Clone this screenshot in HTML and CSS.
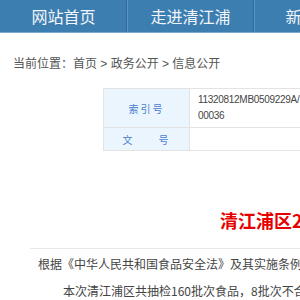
FILE: index.html
```html
<!DOCTYPE html>
<html lang="zh-CN">
<head>
    <meta charset="UTF-8">
    <title>信息公开</title>
    <link rel="stylesheet" href="styles.css">
</head>
<body>
    <div class="nav">
        <a href="#">网站首页</a>
        <a href="#">走进清江浦</a>
        <a href="#">新闻中心</a>
        <a href="#">政务公开</a>
    </div>

    <div class="crumb">当前位置：首页 &gt; 政务公开 &gt; 信息公开</div>

    <table class="info">
        <tr class="row-tall">
            <td class="label">索引号</td>
            <td class="value">11320812MB0509229A/<br>00036</td>
        </tr>
        <tr class="row-short">
            <td class="label">文　　号</td>
            <td class="value"></td>
        </tr>
    </table>

    <h1 class="title">清江浦区2023年食品安全监督抽检信息公告</h1>

    <div class="article">
        <p class="lead">根据《中华人民共和国食品安全法》及其实施条例的有关规定，现将抽检结果公告如下。</p>
        <p class="indent">本次清江浦区共抽检160批次食品，8批次不合格。</p>
    </div>
</body>
</html>
```

FILE: styles.css
```css
html, body {
    overflow: hidden;
}
body {
    margin: 0;
    width: 1000px;
    font-family: "Noto Sans CJK SC", sans-serif;
    background-color: #fff;
}
.nav {
    display: flex;
    height: 32px;
    background-color: #3d7eb1;
    border-bottom: 1px solid #78a9d0;
}
.nav a {
    box-sizing: border-box;
    width: 127px;
    line-height: 32px;
    text-align: center;
    font-size: 16px;
    color: #f2f6fa;
    text-decoration: none;
    border-left: 1px solid #5b95c4;
    border-right: 1px solid #2e6a99;
}
.nav a:first-child {
    border-left-color: #3d7eb1;
}
.crumb {
    margin-top: 21px;
    padding-left: 13px;
    line-height: 20px;
    font-family: "Liberation Sans", "Noto Sans CJK SC", sans-serif;
    font-size: 12px;
    color: #555;
}
.info {
    margin: 14px 0 0 103px;
    width: 500px;
    border-collapse: collapse;
}
.info td {
    border: 1px solid #e3e3e3;
    padding: 0;
}
.row-tall {
    height: 39px;
}
.row-short {
    height: 23px;
}
.label {
    width: 85px;
    background-color: #eaf5fd;
    color: #4b7ed0;
    font-size: 10px;
    letter-spacing: 2px;
    text-align: center;
}
.info .value {
    padding: 0 8px;
    font-family: "Liberation Sans", "Noto Sans CJK SC", sans-serif;
    font-size: 10px;
    letter-spacing: -0.3px;
    line-height: 16px;
    color: #444;
}
.title {
    margin: 57px 0 0;
    padding-left: 220px;
    line-height: 24px;
    font-size: 18px;
    font-weight: bold;
    color: #e60000;
    white-space: nowrap;
}
.article {
    margin: 16px 0 0 30px;
    border-top: 1px solid #e8e8e8;
    padding-top: 5px;
}
.article p {
    margin: 0 0 7px;
    padding-left: 8px;
    line-height: 20px;
    font-size: 12px;
    color: #444;
    white-space: nowrap;
}
.article .indent {
    padding-left: 33px;
}
```
